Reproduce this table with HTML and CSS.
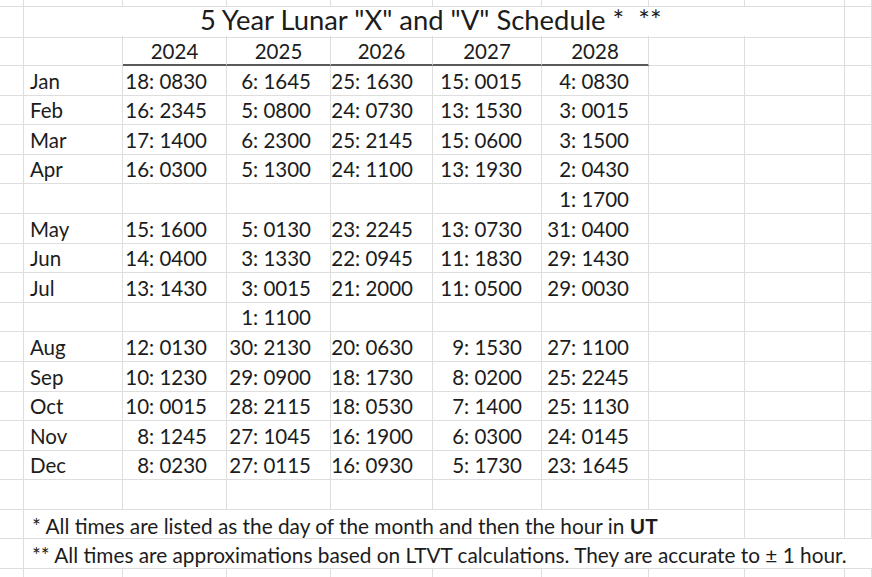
FILE: index.html
```html
<!DOCTYPE html>
<html>
<head>
<meta charset="utf-8">
<link rel="stylesheet" href="styles.css">
</head>
<body>
<div class="sheet">
  <div class="row top"><div class="c"></div><div class="c"></div><div class="c"></div><div class="c"></div><div class="c"></div><div class="c"></div><div class="c"></div><div class="c"></div><div class="c"></div><div class="c"></div></div>
  <div class="row"><div class="c"></div><div class="c title span8">5 Year Lunar "X" and "V" Schedule *&nbsp;&nbsp;**</div><div class="c"></div></div>
  <div class="row"><div class="c"></div><div class="c"></div><div class="c yr">2024</div><div class="c yr">2025</div><div class="c yr">2026</div><div class="c yr">2027</div><div class="c yr">2028</div><div class="c"></div><div class="c"></div><div class="c"></div></div>
  <div class="row"><div class="c"></div><div class="c mo">Jan</div><div class="c v">18: 0830</div><div class="c v">6: 1645</div><div class="c v">25: 1630</div><div class="c v">15: 0015</div><div class="c v">4: 0830</div><div class="c"></div><div class="c"></div><div class="c"></div></div>
  <div class="row"><div class="c"></div><div class="c mo">Feb</div><div class="c v">16: 2345</div><div class="c v">5: 0800</div><div class="c v">24: 0730</div><div class="c v">13: 1530</div><div class="c v">3: 0015</div><div class="c"></div><div class="c"></div><div class="c"></div></div>
  <div class="row"><div class="c"></div><div class="c mo">Mar</div><div class="c v">17: 1400</div><div class="c v">6: 2300</div><div class="c v">25: 2145</div><div class="c v">15: 0600</div><div class="c v">3: 1500</div><div class="c"></div><div class="c"></div><div class="c"></div></div>
  <div class="row"><div class="c"></div><div class="c mo">Apr</div><div class="c v">16: 0300</div><div class="c v">5: 1300</div><div class="c v">24: 1100</div><div class="c v">13: 1930</div><div class="c v">2: 0430</div><div class="c"></div><div class="c"></div><div class="c"></div></div>
  <div class="row"><div class="c"></div><div class="c mo"></div><div class="c v"></div><div class="c v"></div><div class="c v"></div><div class="c v"></div><div class="c v">1: 1700</div><div class="c"></div><div class="c"></div><div class="c"></div></div>
  <div class="row"><div class="c"></div><div class="c mo">May</div><div class="c v">15: 1600</div><div class="c v">5: 0130</div><div class="c v">23: 2245</div><div class="c v">13: 0730</div><div class="c v">31: 0400</div><div class="c"></div><div class="c"></div><div class="c"></div></div>
  <div class="row"><div class="c"></div><div class="c mo">Jun</div><div class="c v">14: 0400</div><div class="c v">3: 1330</div><div class="c v">22: 0945</div><div class="c v">11: 1830</div><div class="c v">29: 1430</div><div class="c"></div><div class="c"></div><div class="c"></div></div>
  <div class="row"><div class="c"></div><div class="c mo">Jul</div><div class="c v">13: 1430</div><div class="c v">3: 0015</div><div class="c v">21: 2000</div><div class="c v">11: 0500</div><div class="c v">29: 0030</div><div class="c"></div><div class="c"></div><div class="c"></div></div>
  <div class="row"><div class="c"></div><div class="c mo"></div><div class="c v"></div><div class="c v">1: 1100</div><div class="c v"></div><div class="c v"></div><div class="c v"></div><div class="c"></div><div class="c"></div><div class="c"></div></div>
  <div class="row"><div class="c"></div><div class="c mo">Aug</div><div class="c v">12: 0130</div><div class="c v">30: 2130</div><div class="c v">20: 0630</div><div class="c v">9: 1530</div><div class="c v">27: 1100</div><div class="c"></div><div class="c"></div><div class="c"></div></div>
  <div class="row"><div class="c"></div><div class="c mo">Sep</div><div class="c v">10: 1230</div><div class="c v">29: 0900</div><div class="c v">18: 1730</div><div class="c v">8: 0200</div><div class="c v">25: 2245</div><div class="c"></div><div class="c"></div><div class="c"></div></div>
  <div class="row"><div class="c"></div><div class="c mo">Oct</div><div class="c v">10: 0015</div><div class="c v">28: 2115</div><div class="c v">18: 0530</div><div class="c v">7: 1400</div><div class="c v">25: 1130</div><div class="c"></div><div class="c"></div><div class="c"></div></div>
  <div class="row"><div class="c"></div><div class="c mo">Nov</div><div class="c v">8: 1245</div><div class="c v">27: 1045</div><div class="c v">16: 1900</div><div class="c v">6: 0300</div><div class="c v">24: 0145</div><div class="c"></div><div class="c"></div><div class="c"></div></div>
  <div class="row"><div class="c"></div><div class="c mo">Dec</div><div class="c v">8: 0230</div><div class="c v">27: 0115</div><div class="c v">16: 0930</div><div class="c v">5: 1730</div><div class="c v">23: 1645</div><div class="c"></div><div class="c"></div><div class="c"></div></div>
  <div class="row"><div class="c"></div><div class="c"></div><div class="c"></div><div class="c"></div><div class="c"></div><div class="c"></div><div class="c"></div><div class="c"></div><div class="c"></div><div class="c"></div></div>
  <div class="row"><div class="c"></div><div class="c note span7">* All times are listed as the day of the month and then the hour in <b>UT</b></div><div class="c"></div><div class="c"></div></div>
  <div class="row"><div class="c"></div><div class="c note span9">** All times are approximations based on LTVT calculations. They are accurate to ± 1 hour.</div></div>
  <div class="row"><div class="c"></div><div class="c"></div><div class="c"></div><div class="c"></div><div class="c"></div><div class="c"></div><div class="c"></div><div class="c"></div><div class="c"></div><div class="c"></div></div>
</div>
</body>
</html>
```

FILE: styles.css
```css
html, body {
  margin: 0;
  padding: 0;
  background: #ffffff;
}
.sheet {
  width: 872px;
  height: 577px;
  overflow: hidden;
  font-family: Lato, "Open Sans", sans-serif;
  color: #1c1c1c;
}
.row {
  display: grid;
  grid-template-columns: 24px 99px 104px 104px 102px 109px 107px 96px 100px 1fr;
  height: 29.6px;
}
.row.top {
  height: 6.8px;
}
.c {
  box-sizing: border-box;
  border-right: 1px solid #dedede;
  border-bottom: 1px solid #dedede;
  display: flex;
  align-items: flex-end;
  font-size: 20.5px;
  line-height: 20px;
  padding-bottom: 4px;
  white-space: nowrap;
  min-width: 0;
}
.top .c {
  padding-bottom: 0;
}
.span7 { grid-column: span 7; }
.span8 { grid-column: span 8; }
.span9 { grid-column: span 9; border-right: none; }
.title {
  font-size: 27.4px;
  line-height: 26px;
  padding-left: 176px;
  padding-bottom: 4px;
}
.yr {
  justify-content: center;
  border-bottom: 2px solid #5a5a5a;
  padding-bottom: 3px;
}
.mo {
  padding-left: 6px;
}
.v {
  justify-content: flex-end;
  padding-right: 19px;
}
.note {
  display: block;
  font-size: 20.8px;
  line-height: 21px;
  padding-left: 8px;
  padding-top: 5px;
  padding-bottom: 0;
}
.note b {
  font-weight: 700;
}
```
